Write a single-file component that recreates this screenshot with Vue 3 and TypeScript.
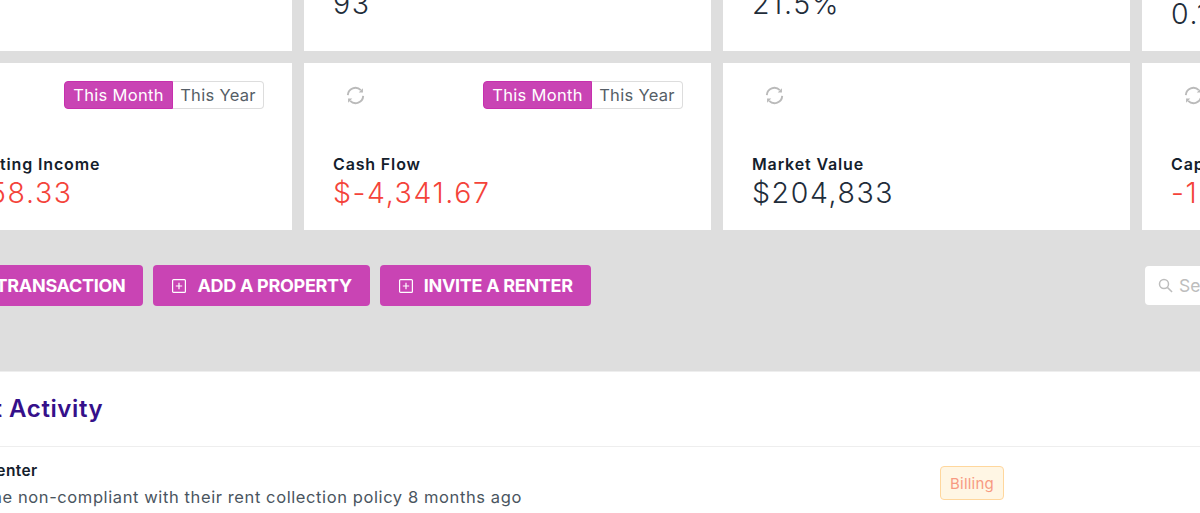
<template>
  <div class="page">
    <div class="cards">
      <div v-for="c in cards" :key="c.label" class="card" :class="{ raised: c.raised }">
        <div class="card-top">
          <svg class="refresh" viewBox="0 0 20 20" fill="none" stroke="#bababa" stroke-width="2">
            <path d="M1.9 9.6A8 8 0 0 1 15.6 4.4" />
            <path d="M18.1 10.4A8 8 0 0 1 4.4 15.6" />
            <path d="M17.8 2.4v4.4h-4.4z" fill="#bababa" stroke="none" />
            <path d="M2.2 17.6v-4.4h4.4z" fill="#bababa" stroke="none" />
          </svg>
          <div v-if="c.toggle" class="toggle">
            <button class="on">This Month</button>
            <button>This Year</button>
          </div>
        </div>
        <div class="label">{{ c.label }}</div>
        <div class="value" :class="{ neg: c.neg }">{{ c.value }}</div>
      </div>
    </div>

    <div class="toolbar">
      <div class="actions">
        <button v-for="a in actions" :key="a" class="action">
          <svg class="plus" viewBox="0 0 14 14" fill="none" stroke="#fff" stroke-width="1.2">
            <rect x="0.6" y="0.6" width="12.8" height="12.8" rx="1" />
            <path d="M7 3.8v6.4M3.8 7h6.4" />
          </svg>
          {{ a }}
        </button>
      </div>
      <div class="search">
        <svg class="lens" viewBox="0 0 16 16" fill="none" stroke="#bdbdbd" stroke-width="1.6">
          <circle cx="6.4" cy="6.4" r="4.8" />
          <path d="M10 10l5 5" />
        </svg>
        <span>Search</span>
      </div>
    </div>

    <section class="activity">
      <h2>Recent Activity</h2>
      <div class="row">
        <div class="row-text">
          <div class="row-title">Renter</div>
          <div class="row-desc">Taylor Morgan became non-compliant with their rent collection policy 8 months ago</div>
        </div>
        <span class="badge">Billing</span>
      </div>
    </section>
  </div>
</template>

<script setup lang="ts">
interface Card {
  label: string
  value: string
  neg?: boolean
  toggle?: boolean
  raised?: boolean
}

const cards: Card[] = [
  { label: 'Properties', value: '12', raised: true },
  { label: 'Units', value: '93', raised: true },
  { label: 'Occupancy', value: '21.5%', raised: true },
  { label: 'Debt Ratio', value: '0.12' },
  { label: 'Net Operating Income', value: '$-1,958.33', neg: true, toggle: true },
  { label: 'Cash Flow', value: '$-4,341.67', neg: true, toggle: true },
  { label: 'Market Value', value: '$204,833' },
  { label: 'Cap Rate', value: '-12.7%', neg: true },
]

const actions = ['ADD A TRANSACTION', 'ADD A PROPERTY', 'INVITE A RENTER']
</script>

<style>
html, body { overflow: hidden; background: #dedede; }
</style>

<style scoped>
.page { width: 1664px; height: 629px; margin: -116px 0 0 -115px; background: #dedede; font-family: Inter, "Liberation Sans", sans-serif; color: #1d2733; }
.cards { display: grid; grid-template-columns: repeat(4, 407px); gap: 12px; }
.card { height: 167px; box-sizing: border-box; background: #fff; padding: 18px 28px 0 29px; }
.card-top { height: 65px; display: flex; justify-content: space-between; align-items: flex-start; }
.refresh { width: 19px; height: 19px; margin: 5px 0 0 13px; }
.toggle { display: flex; height: 28px; }
.toggle button { font: 400 16.5px Inter, sans-serif; letter-spacing: .3px; padding: 0; width: 91px; color: #555e66; background: #fff; border: 1px solid #ddd; border-left: 0; border-radius: 0 4px 4px 0; }
.toggle .on { width: 109px; color: #fff; background: #c944b4; border: 1px solid #c730ae; border-radius: 4px 0 0 4px; }
.label { font-size: 16px; font-weight: 600; line-height: 20px; margin-top: 8px; color: #14202c; letter-spacing: .85px; }
.value { font-size: 28.5px; font-weight: 300; line-height: 36px; margin-top: 1px; letter-spacing: 1.6px; color: #1f2d3a; }
.value.neg { color: #f4433a; }
.raised .value { margin-top: -9px; }
.toolbar { display: flex; justify-content: space-between; align-items: center; margin-top: 35px; height: 41px; padding-left: 7px; }
.actions { display: flex; gap: 10px; }
.action { display: flex; align-items: center; gap: 11px; height: 41px; padding: 0 18px 0 19px; font: 700 18px Inter, sans-serif; letter-spacing: -.3px; color: #fff; background: #c944b4; border: 0; border-radius: 4px; white-space: nowrap; }
.plus { width: 14px; height: 14px; flex: none; }
.search { display: flex; align-items: center; gap: 6px; width: 404px; height: 39px; box-sizing: border-box; padding-left: 13px; background: #fff; border-radius: 4px; font-size: 17.5px; color: #bdbdbd; }
.lens { width: 15px; height: 15px; }
.activity { margin-top: 65px; height: 200px; background: #fff; border-top: 1px solid #eee; }
h2 { margin: 0; height: 75px; box-sizing: border-box; padding: 22px 0 0 33px; font-size: 24px; font-weight: 600; line-height: 30px; letter-spacing: .6px; color: #35108a; border-bottom: 1px solid #eee; }
.row { display: flex; padding: 19px 0 0 43px; }
.row-text { width: 1012px; margin-top: -11px; flex: none; }
.row-title { font-size: 15.5px; font-weight: 600; line-height: 20px; color: #14202c; margin: 6px 0 0 58px; letter-spacing: .4px; }
.row-desc { font-size: 16.5px; line-height: 20px; margin-top: 6px; margin-left: -107px; letter-spacing: .6px; color: #4a5560; white-space: nowrap; }
.badge { height: 34px; width: 64px; box-sizing: border-box; display: flex; align-items: center; justify-content: center; font-size: 15px; letter-spacing: .2px; color: #f79a82; background: #fff6e4; border: 1.5px solid #ffd79d; border-radius: 4px; }
</style>
